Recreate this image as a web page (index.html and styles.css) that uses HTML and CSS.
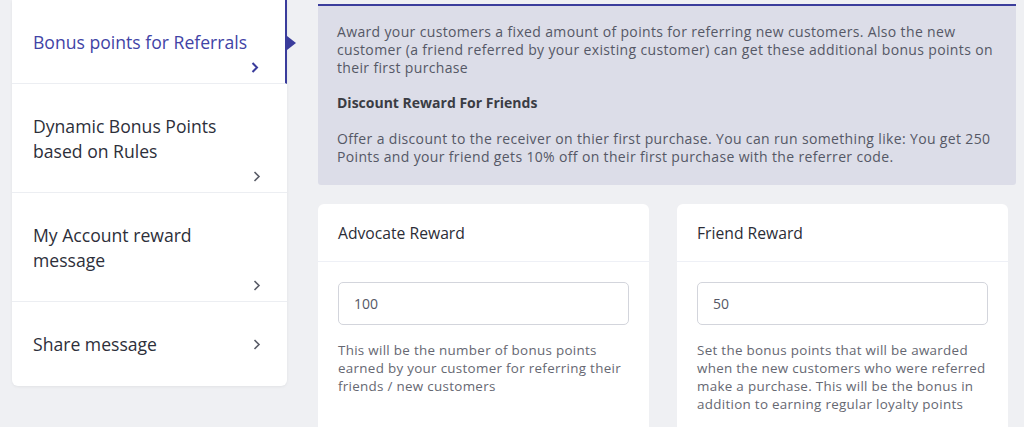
FILE: index.html
```
<!DOCTYPE html>
<html>
<head>
<meta charset="utf-8">
<link rel="stylesheet" href="styles.css">
</head>
<body>
<div class="page">
  <nav class="sidebar">
    <a class="nav-item active"><span class="nav-text">Bonus points for Referrals</span><svg class="chev" viewBox="0 0 8 12" width="8" height="12"><path d="M1.5 1.5 L6 6 L1.5 10.5" fill="none" stroke="currentColor" stroke-width="2"/></svg></a>
    <a class="nav-item"><span class="nav-text">Dynamic Bonus Points based on Rules</span><svg class="chev" viewBox="0 0 8 12" width="8" height="12"><path d="M1.5 1.5 L6 6 L1.5 10.5" fill="none" stroke="currentColor" stroke-width="1.6"/></svg></a>
    <a class="nav-item"><span class="nav-text">My Account reward message</span><svg class="chev" viewBox="0 0 8 12" width="8" height="12"><path d="M1.5 1.5 L6 6 L1.5 10.5" fill="none" stroke="currentColor" stroke-width="1.6"/></svg></a>
    <a class="nav-item"><span class="nav-text">Share message</span><svg class="chev" viewBox="0 0 8 12" width="8" height="12"><path d="M1.5 1.5 L6 6 L1.5 10.5" fill="none" stroke="currentColor" stroke-width="1.6"/></svg></a>
  </nav>
  <main class="main">
    <section class="info">
      <p>Award your customers a fixed amount of points for referring new customers. Also the new customer (a friend referred by your existing customer) can get these additional bonus points on their first purchase</p>
      <h4>Discount Reward For Friends</h4>
      <p>Offer a discount to the receiver on thier first purchase. You can run something like: You get 250 Points and your friend gets 10% off on their first purchase with the referrer code.</p>
    </section>
    <div class="cards">
      <div class="card">
        <div class="card-head">Advocate Reward</div>
        <div class="card-body">
          <div class="input">100</div>
          <p class="help">This will be the number of bonus points earned by your customer for referring their friends / new customers</p>
        </div>
      </div>
      <div class="card">
        <div class="card-head">Friend Reward</div>
        <div class="card-body">
          <div class="input">50</div>
          <p class="help">Set the bonus points that will be awarded when the new customers who were referred make a purchase. This will be the bonus in addition to earning regular loyalty points</p>
        </div>
      </div>
    </div>
  </main>
</div>
</body>
</html>
```

FILE: styles.css
```
* { box-sizing: border-box; }
html, body { margin: 0; padding: 0; }
body {
  background: #eff0f3;
  font-family: "Open Sans", "Liberation Sans", sans-serif;
  color: #333;
  overflow: hidden;
  height: 427px;
}
.page {
  display: flex;
  align-items: flex-start;
  padding-left: 12px;
}
.sidebar {
  width: 275px;
  flex: none;
  background: #fff;
  border-radius: 0 0 6px 6px;
  box-shadow: 0 1px 3px rgba(0,0,0,0.06);
  display: flex;
  flex-direction: column;
}
.nav-item {
  position: relative;
  display: flex;
  flex-wrap: wrap;
  align-items: center;
  align-content: flex-start;
  column-gap: 12px;
  min-height: 84px;
  padding: 30px 26px 3px 21px;
  border-bottom: 1px solid #eceef2;
  color: #2d2f3a;
  font-size: 17.6px;
  font-weight: 500;
  line-height: 25px;
}
.nav-item:last-child { border-bottom: none; }
.nav-text { flex: 0 1 auto; }
.chev {
  margin-left: auto;
  height: 25px;
  color: #5a5d68;
}
.nav-item.active {
  color: #4143a6;
  border-right: 2px solid #3a3c9c;
}
.nav-item.active .chev { color: #3a3c9c; }
.nav-item.active::after {
  content: "";
  position: absolute;
  right: -11px;
  top: 36px;
  border-left: 9px solid #3a3c9c;
  border-top: 7px solid transparent;
  border-bottom: 7px solid transparent;
}
.main {
  margin-left: 31px;
  width: 698px;
  padding-top: 4px;
}
.info {
  background: #dcdde8;
  border-top: 2px solid #3b3d9c;
  padding: 17px 19px 19px 19px;
  font-size: 14px;
  letter-spacing: 0.35px;
  line-height: 18px;
  color: #555866;
  border-radius: 0 0 3px 3px;
}
.info p { margin: 0; }
.info h4 {
  margin: 17px 0 18px;
  font-size: 14px;
  letter-spacing: 0;
  line-height: 18px;
  font-weight: 700;
  color: #3a3c44;
}
.cards {
  display: flex;
  gap: 28px;
  margin-top: 19px;
  padding-right: 8px;
}
.card {
  flex: 1;
  background: #fff;
  border-radius: 6px 6px 0 0;
  height: 240px;
}
.card-head {
  height: 58px;
  padding: 1px 20px 0;
  border-bottom: 1px solid #eef0f6;
  display: flex;
  align-items: center;
  font-size: 15.7px;
  font-weight: 500;
  color: #2b2d36;
}
.card-body {
  padding: 20px;
}
.input {
  height: 43px;
  border: 1px solid #d3d5dc;
  border-radius: 5px;
  padding: 0 15px;
  display: flex;
  align-items: center;
  font-size: 14px;
  color: #555866;
}
.help {
  margin: 16px 0 0;
  font-size: 13.4px;
  letter-spacing: 0.3px;
  line-height: 18px;
  color: #666872;
}
```
